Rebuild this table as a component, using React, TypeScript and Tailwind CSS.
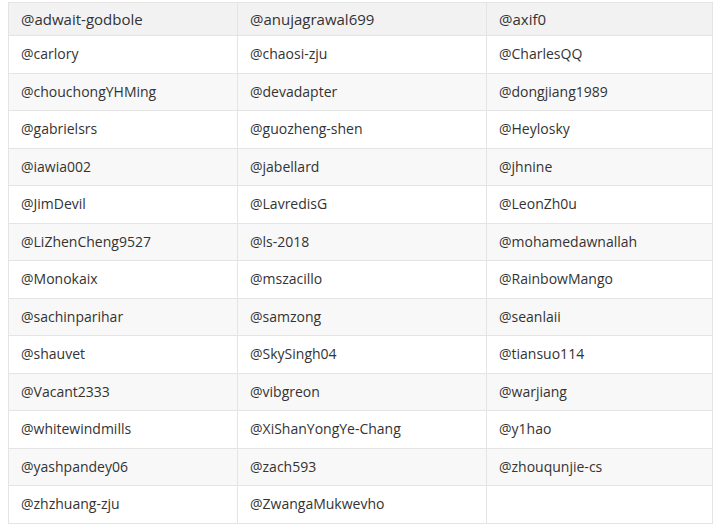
import React from "react";

const header = ["@adwait-godbole", "@anujagrawal699", "@axif0"];
const rows: string[][] = [
  ["@carlory", "@chaosi-zju", "@CharlesQQ"],
  ["@chouchongYHMing", "@devadapter", "@dongjiang1989"],
  ["@gabrielsrs", "@guozheng-shen", "@Heylosky"],
  ["@iawia002", "@jabellard", "@jhnine"],
  ["@JimDevil", "@LavredisG", "@LeonZh0u"],
  ["@LiZhenCheng9527", "@ls-2018", "@mohamedawnallah"],
  ["@Monokaix", "@mszacillo", "@RainbowMango"],
  ["@sachinparihar", "@samzong", "@seanlaii"],
  ["@shauvet", "@SkySingh04", "@tiansuo114"],
  ["@Vacant2333", "@vibgreon", "@warjiang"],
  ["@whitewindmills", "@XiShanYongYe-Chang", "@y1hao"],
  ["@yashpandey06", "@zach593", "@zhouqunjie-cs"],
  ["@zhzhuang-zju", "@ZwangaMukwevho", ""],
];

export default function App() {
  return (
    <div
      className="w-[720px] h-[527px] bg-white pt-[2px] pl-[8px] text-[#333333] text-[14px]"
      style={{ fontFamily: '"Open Sans", "Noto Sans", sans-serif' }}
    >
      <table className="border-collapse table-fixed w-[704px]">
        <colgroup>
          <col className="w-[229px]" />
          <col className="w-[249px]" />
          <col className="w-[226px]" />
        </colgroup>
        <thead>
          <tr className="h-[33px] bg-[#f2f2f2]">
            {header.map((h) => (
              <th
                key={h}
                className="border border-[#e4e4e4] px-[12px] text-left font-normal text-[15px] leading-none"
              >
                {h}
              </th>
            ))}
          </tr>
        </thead>
        <tbody>
          {rows.map((r, i) => (
            <tr
              key={i}
              className={`h-[37.5px] ${i % 2 === 1 ? "bg-[#f8f8f8]" : "bg-white"}`}
            >
              {r.map((c, j) => (
                <td
                  key={j}
                  className="border border-[#e4e4e4] px-[12px] leading-none"
                >
                  {c}
                </td>
              ))}
            </tr>
          ))}
        </tbody>
      </table>
    </div>
  );
}
